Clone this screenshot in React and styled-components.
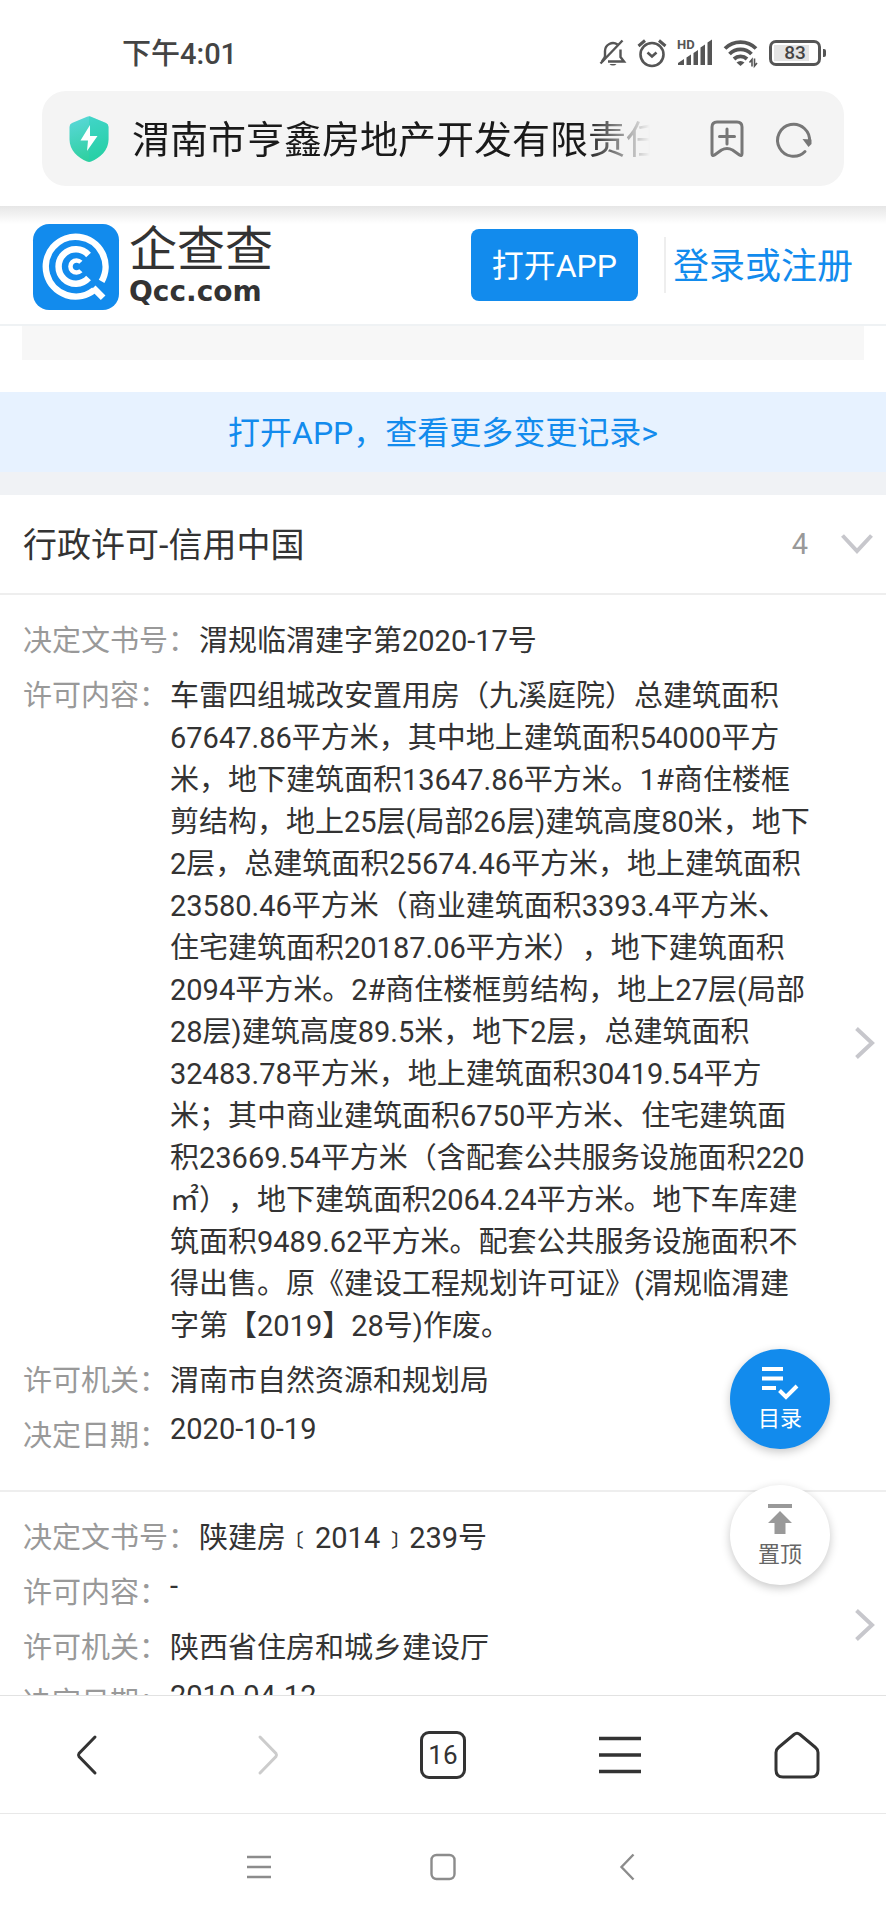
import styled, { createGlobalStyle } from "styled-components";

const permits = [
  {
    id: 1,
    fields: [
      { label: "决定文书号：", value: "渭规临渭建字第2020-17号" },
      {
        label: "许可内容：",
        value:
          "车雷四组城改安置用房（九溪庭院）总建筑面积67647.86平方米，其中地上建筑面积54000平方米，地下建筑面积13647.86平方米。1#商住楼框剪结构，地上25层(局部26层)建筑高度80米，地下2层，总建筑面积25674.46平方米，地上建筑面积23580.46平方米（商业建筑面积3393.4平方米、住宅建筑面积20187.06平方米），地下建筑面积2094平方米。2#商住楼框剪结构，地上27层(局部28层)建筑高度89.5米，地下2层，总建筑面积32483.78平方米，地上建筑面积30419.54平方米；其中商业建筑面积6750平方米、住宅建筑面积23669.54平方米（含配套公共服务设施面积220㎡），地下建筑面积2064.24平方米。地下车库建筑面积9489.62平方米。配套公共服务设施面积不得出售。原《建设工程规划许可证》(渭规临渭建字第【2019】28号)作废。",
      },
      { label: "许可机关：", value: "渭南市自然资源和规划局" },
      { label: "决定日期：", value: "2020-10-19" },
    ],
  },
  {
    id: 2,
    fields: [
      { label: "决定文书号：", value: "陕建房﹝2014﹞239号" },
      { label: "许可内容：", value: "-" },
      { label: "许可机关：", value: "陕西省住房和城乡建设厅" },
      { label: "决定日期：", value: "2010-04-12" },
    ],
  },
];

const StatusBar = () => {
  return (
    <StatusRow>
      <Clock>下午4:01</Clock>
      <StatusIcons>
        <svg width="28" height="28" viewBox="0 0 28 28" fill="none" stroke="#555" strokeWidth="2.4">
          <path d="M6 18V12a8 8 0 0 1 12.5-6.5M21.500 10.500V18l3.500 4.500H9" />
          <path d="M1.500 24.500 23.500 1.500" />
          <path d="M3 22.500 6 18" />
          <path d="M10.500 25h7a4 3 0 0 1-7 0z" fill="#555" stroke="none" />
        </svg>
        <svg width="30" height="28" viewBox="0 0 30 28" fill="none" stroke="#555" strokeWidth="2.6">
          <circle cx="15" cy="15.500" r="11.500" />
          <path d="M10.500 13.500 15 17.500l4.500-4" />
          <path d="M1.500 7 8 1.500M28.500 7 22 1.500" strokeWidth="3" />
        </svg>
        <svg width="36" height="28" viewBox="0 0 36 28" fill="#555">
          <text x="0" y="10" fontFamily="Roboto, sans-serif" fontWeight="700" fontSize="13">
            HD
          </text>
          <path d="M1 26v-2l6-4V26zM9.500 18.500 14 15.500v10.500h-4.500zM16.500 14l4.500-3v15H16.500zM23.500 8.500 28 5.500v20.500h-4.500zM30.500 3.500 35 .5v25.500h-4.500z" />
        </svg>
        <svg width="36" height="28" viewBox="0 0 36 28" fill="none" stroke="#555" strokeWidth="3.800">
          <path d="M2 9.500a22 22 0 0 1 31 0" />
          <path d="M6.500 15a15.500 15.500 0 0 1 22 0" />
          <path d="M11 20a9.500 9.500 0 0 1 13 0" />
          <path d="M13.500 23.500a6 6 0 0 1 8 0l-4 3.500z" fill="#555" stroke="none" />
          <path d="M26.500 23.500 29 20.500v7M31.500 19.500v7.500l2.500-3" stroke="#555" strokeWidth="1.600" />
        </svg>
        <Battery>
          <BatteryBody>
            <BatteryLevel>83</BatteryLevel>
          </BatteryBody>
          <BatteryTip />
        </Battery>
      </StatusIcons>
    </StatusRow>
  );
};

const AddressBar = () => {
  return (
    <AddressBox>
      <svg width="40" height="46" viewBox="0 0 40 46">
        <defs>
          <linearGradient id="shield" x1="0" y1="0" x2="0.300" y2="1">
            <stop offset="0" stopColor="#5cd8dc" />
            <stop offset="1" stopColor="#2fd0a0" />
          </linearGradient>
        </defs>
        <path
          d="M18 .8a4 4 0 0 1 4 0L37 7q2.500 1 2.500 4v12.500C39.500 34 31 42 22 45.500a5 5 0 0 1-4 0C9 42 .5 34 .5 23.500V11Q.5 8 3 7z"
          fill="url(#shield)"
        />
        <path d="M20 0a4 4 0 0 1 2 .8L37 7q2.500 1 2.500 4v12.500C39.500 34 31 42 22 45.500l-2 .5z" fill="#1ed0b4" opacity="0.350" />
        <path d="M21 9 11.500 24.500H19L18 35l10.500-15H21z" fill="#fff" />
      </svg>
      <PageTitle
        aria-label="网页标题"
        readOnly
        value="渭南市亨鑫房地产开发有限责任公司"
      />
      <IconButton aria-label="收藏">
        <svg width="34" height="38" viewBox="0 0 34 38" fill="none" stroke="#777" strokeWidth="3" strokeLinejoin="round">
          <path d="M7 2h20q5 0 5 5v26.500q0 3-2.500 1.500l-7-5q-5.500-3-11 0l-7 5Q2 36.500 2 33.500V7q0-5 5-5z" />
          <path d="M17 9v15M9.500 16.500h15" strokeLinecap="round" />
        </svg>
      </IconButton>
      <IconButton aria-label="刷新">
        <svg width="36" height="36" viewBox="0 0 36 36" fill="none" stroke="#777" strokeWidth="3" strokeLinecap="round">
          <path d="M29 30.500A16 16 0 1 1 33.500 21" />
          <path d="M26.500 18 35.500 18.500V23L32.500 26z" fill="#777" stroke="none" />
        </svg>
      </IconButton>
    </AddressBox>
  );
};

const SiteHeader = () => {
  return (
    <SiteBar>
      <Brand href="#">
        <svg width="86" height="86" viewBox="0 0 85 85" fill="none" stroke="#fff">
          <rect width="85" height="85" rx="16" fill="#128bed" stroke="none" />
          <path d="M67.800 56.800A29.500 29.500 0 1 0 60.500 65.300" strokeWidth="6.400" />
          <path d="M59.500 63 69.300 73" strokeWidth="6.400" />
          <path d="M54.900 30.600a17 17 0 1 0 0 22.800" strokeWidth="6.400" />
          <path d="M47.300 37.800a6 6 0 1 0 0 8.400" strokeWidth="4.500" />
        </svg>
        <BrandText>
          <BrandName>企查查</BrandName>
          <BrandDomain>Qcc.com</BrandDomain>
        </BrandText>
      </Brand>
      <OpenAppButton>打开APP</OpenAppButton>
      <LoginLink href="#">登录或注册</LoginLink>
    </SiteBar>
  );
};

const PermitItem = ({ fields }) => {
  return (
    <PermitBox>
      <FieldList>
        {fields.map(({ label, value }) => (
          <Field key={label}>
            <FieldLabel>{label}</FieldLabel>
            <FieldValue>{value}</FieldValue>
          </Field>
        ))}
      </FieldList>
      <svg width="22" height="34" viewBox="0 0 22 34" fill="none" stroke="#c7c7cc" strokeWidth="4">
        <path d="M2.500 2.500 18 17 2.500 31.500" />
      </svg>
    </PermitBox>
  );
};

const FloatActions = () => {
  return (
    <FloatGroup>
      <FloatButton $primary>
        <svg width="38" height="34" viewBox="0 0 38 34" fill="none" stroke="#fff" strokeWidth="4">
          <path d="M1 3h21M1 12.500h21M1 22h14" />
          <path d="M18.500 24.500 25 31l11-11" />
        </svg>
        目录
      </FloatButton>
      <FloatButton>
        <svg width="26" height="34" viewBox="0 0 26 34" fill="#999">
          <path d="M1 2h24v4H1zM13 9 25 21h-6.500v11h-11V21H1z" />
        </svg>
        置顶
      </FloatButton>
    </FloatGroup>
  );
};

const BrowserNav = () => {
  return (
    <BrowserBar>
      <IconButton aria-label="后退">
        <svg width="28" height="42" viewBox="0 0 28 42" fill="none" stroke="#333" strokeWidth="3" strokeLinecap="round">
          <path d="M20 3 4 19.500q-1 1.500 0 3L20 39" />
        </svg>
      </IconButton>
      <IconButton aria-label="前进" disabled>
        <svg width="28" height="42" viewBox="0 0 28 42" fill="none" stroke="#ccc" strokeWidth="3" strokeLinecap="round">
          <path d="m8 3 16 16.500q1 1.500 0 3L8 39" />
        </svg>
      </IconButton>
      <TabCount aria-label="标签页">16</TabCount>
      <IconButton aria-label="菜单">
        <svg width="44" height="40" viewBox="0 0 44 40" stroke="#333" strokeWidth="3.400">
          <path d="M1 3.500h42M1 20h42M1 36.500h42" />
        </svg>
      </IconButton>
      <IconButton aria-label="主页">
        <svg width="46" height="48" viewBox="0 0 46 48" fill="none" stroke="#333" strokeWidth="3">
          <path d="M20 3.500q3-2.500 6 0l15.500 13q2.500 2 2.500 5V39q0 7-7 7H9q-7 0-7-7V21.500q0-3 2.500-5z" />
        </svg>
      </IconButton>
    </BrowserBar>
  );
};

const SystemNav = () => {
  return (
    <SystemBar>
      <IconButton aria-label="最近任务">
        <svg width="26" height="26" viewBox="0 0 26 26" stroke="#8c8c8c" strokeWidth="2.600">
          <path d="M1 3h24M1 13h24M1 23h24" />
        </svg>
      </IconButton>
      <IconButton aria-label="桌面">
        <svg width="26" height="28" viewBox="0 0 26 28" fill="none" stroke="#8c8c8c" strokeWidth="2.400">
          <rect x="1.500" y="2" width="23" height="24" rx="5" />
        </svg>
      </IconButton>
      <IconButton aria-label="返回">
        <svg width="16" height="28" viewBox="0 0 16 28" fill="none" stroke="#8c8c8c" strokeWidth="2.400">
          <path d="M14.500 1.500 2.500 14l12 12.500" />
        </svg>
      </IconButton>
    </SystemBar>
  );
};

const App = () => {
  return (
    <Screen>
      <GlobalStyle />
      <TopArea>
        <StatusBar />
        <AddressBar />
      </TopArea>
      <WebView>
        <SiteHeader />
        <ScrollArea>
          <PreviousCard />
          <MoreLink href="#">打开APP，查看更多变更记录&gt;</MoreLink>
          <section>
            <SectionHeader>
              <SectionTitle>行政许可-信用中国</SectionTitle>
              <SectionCount>4</SectionCount>
              <svg width="34" height="22" viewBox="0 0 34 22" fill="none" stroke="#c7c7cc" strokeWidth="4">
                <path d="M2.500 2.500 17 18 31.500 2.500" />
              </svg>
            </SectionHeader>
            {permits.map((permit) => (
              <PermitItem key={permit.id} fields={permit.fields} />
            ))}
          </section>
        </ScrollArea>
        <FloatActions />
      </WebView>
      <BrowserNav />
      <SystemNav />
    </Screen>
  );
};

export default App;

const GlobalStyle = createGlobalStyle`
  * {
    box-sizing: border-box;
  }

  body {
    margin: 0;
    background-color: #fff;
    color: #333;
    font-family: Roboto, "Noto Sans CJK SC", sans-serif;
    text-spacing-trim: space-all;
  }

  button, input {
    border: none;
    padding: 0;
    background: none;
    color: inherit;
    font-family: inherit;
  }

  a {
    color: #128bed;
    text-decoration: none;
  }

  svg {
    display: block;
    flex-shrink: 0;
    overflow: visible;
  }
`;

const Screen = styled.div`
  display: flex;
  flex-direction: column;
  height: 100vh;
`;

const TopArea = styled.header`
  flex-shrink: 0;
  padding: 32px 42px 20px;
`;

const StatusRow = styled.div`
  display: flex;
  align-items: center;
  justify-content: space-between;
  height: 42px;
  margin-bottom: 17px;
  padding: 0 18px 0 80px;
`;

const Clock = styled.div`
  padding-bottom: 4px;
  font-size: 29px;
  font-weight: 500;
  color: #444;
`;

const StatusIcons = styled.div`
  display: flex;
  align-items: center;
  gap: 10px;
`;

const Battery = styled.div`
  display: flex;
  align-items: center;
  gap: 2px;
`;

const BatteryBody = styled.div`
  width: 52px;
  height: 26px;
  padding: 2px;
  border: 3px solid #555;
  border-radius: 7px;
`;

const BatteryLevel = styled.div`
  height: 100%;
  background: linear-gradient(to right, #e4e4e4 83%, #fff 83%);
  font-size: 19px;
  font-weight: 500;
  line-height: 16px;
  text-align: center;
  color: #444;
`;

const BatteryTip = styled.div`
  width: 3px;
  height: 8px;
  border-radius: 0 2px 2px 0;
  background-color: #555;
`;

const AddressBox = styled.div`
  display: flex;
  align-items: center;
  gap: 32px;
  height: 95px;
  padding: 0 32px 0 27px;
  border-radius: 24px;
  background-color: #f4f4f4;
`;

const PageTitle = styled.input`
  flex: 1;
  min-width: 0;
  margin-left: -9px;
  margin-right: 28px;
  padding-bottom: 4px;
  font-size: 38px;
  color: #1a1a1a;
  outline: none;
  mask-image: linear-gradient(to right, #000 calc(100% - 64px), transparent);
`;

const IconButton = styled.button`
  display: flex;
  align-items: center;
  justify-content: center;
`;

const WebView = styled.main`
  position: relative;
  flex: 1;
  min-height: 0;
  display: flex;
  flex-direction: column;
`;

const SiteBar = styled.div`
  display: flex;
  align-items: center;
  flex-shrink: 0;
  height: 120px;
  padding: 0 33px;
  border-bottom: 2px solid #eff2f4;
  background: linear-gradient(#e6e6e6, #fff 18px);
`;

const Brand = styled.a`
  display: flex;
  align-items: center;
  gap: 10px;
  margin-right: auto;
  padding-top: 4px;
  color: #333;
`;

const BrandText = styled.div`
  display: flex;
  flex-direction: column;
`;

const BrandName = styled.span`
  font-size: 48px;
  line-height: 50px;
`;

const BrandDomain = styled.span`
  font-family: "DejaVu Sans", sans-serif;
  font-size: 28px;
  font-weight: 700;
  line-height: 34px;
`;

const OpenAppButton = styled.button`
  height: 72px;
  margin-right: 26px;
  padding: 0 21px 4px;
  border-radius: 8px;
  background-color: #128bed;
  font-size: 32px;
  color: #fff;
`;

const LoginLink = styled.a`
  padding: 0 0 4px 7px;
  border-left: 2px solid #eee;
  font-size: 36px;
`;

const ScrollArea = styled.div`
  flex: 1;
  min-height: 0;
  overflow-y: auto;
  scrollbar-width: none;
`;

const PreviousCard = styled.div`
  height: 34px;
  margin: 0 22px 32px;
  background-color: #f7f7f7;
`;

const MoreLink = styled.a`
  display: flex;
  align-items: center;
  justify-content: center;
  height: 80px;
  padding-bottom: 4px;
  background-color: #e7f2ff;
  font-size: 32px;
`;

const SectionHeader = styled.div`
  display: flex;
  align-items: center;
  height: 123px;
  padding: 0 12px 0 23px;
  border-top: 23px solid #f0f2f5;
  border-bottom: 2px solid #eee;
`;

const SectionTitle = styled.h2`
  margin: 0 auto 0 0;
  padding-bottom: 4px;
  font-size: 34px;
  font-weight: 400;
`;

const SectionCount = styled.span`
  margin-right: 32px;
  font-size: 29px;
  color: #999;
`;

const PermitBox = styled.article`
  display: flex;
  align-items: center;
  justify-content: space-between;
  padding: 0 10px 0 23px;
  border-bottom: 2px solid #eee;
`;

const FieldList = styled.dl`
  display: flex;
  flex-direction: column;
  gap: 13px;
  margin: 22px 42px 36px 0;
  font-size: 29px;
`;

const Field = styled.div`
  display: flex;
  align-items: flex-start;
  gap: 2px;
`;

const FieldLabel = styled.dt`
  flex-shrink: 0;
  color: #999;
`;

const FieldValue = styled.dd`
  margin: 0;
`;

const FloatGroup = styled.div`
  position: absolute;
  right: 56px;
  bottom: 110px;
  display: flex;
  flex-direction: column;
  gap: 36px;
`;

const FloatButton = styled.button`
  display: flex;
  flex-direction: column;
  align-items: center;
  justify-content: center;
  width: 100px;
  height: 100px;
  border-radius: 50%;
  background-color: ${({ $primary }) => ($primary ? "#128bed" : "#fff")};
  box-shadow: 0 3px 10px rgba(0, 0, 0, 0.22);
  font-size: 22px;
  color: ${({ $primary }) => ($primary ? "#fff" : "#666")};
`;

const BrowserBar = styled.nav`
  display: grid;
  grid-template-columns: repeat(5, 1fr);
  align-items: center;
  justify-items: center;
  flex-shrink: 0;
  height: 118px;
  border-top: 1px solid #e2e2e2;
`;

const TabCount = styled.button`
  width: 46px;
  height: 48px;
  border: 3px solid #333;
  border-radius: 9px;
  font-size: 26px;
`;

const SystemBar = styled.nav`
  display: grid;
  grid-template-columns: repeat(3, 184px);
  align-items: center;
  justify-content: center;
  justify-items: center;
  flex-shrink: 0;
  height: 107px;
  border-top: 1px solid #e8e8e8;
`;
